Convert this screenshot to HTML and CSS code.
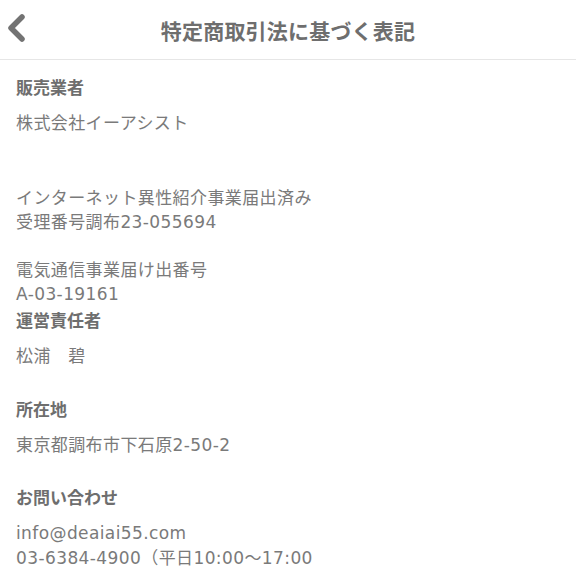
FILE: index.html
```html
<!DOCTYPE html>
<html lang="ja">
<head>
  <meta charset="UTF-8">
  <meta name="viewport" content="width=device-width, initial-scale=1">
  <title>特定商取引法に基づく表記</title>
  <link rel="stylesheet" href="styles.css">
</head>
<body>
  <div class="header">
    <a class="btn-back" href="#">
      <svg width="22" height="30" viewBox="0 0 22 30">
        <path d="M16 4 L5 15 L16 26" fill="none" stroke="#737373" stroke-width="5.5" stroke-linecap="round" stroke-linejoin="round"/>
      </svg>
    </a>
    <div class="title">特定商取引法に基づく表記</div>
  </div>

  <div class="container">
    <div class="section first">
      <div class="label">販売業者</div>
      <p class="value">株式会社イーアシスト</p>
      <p class="value license">インターネット異性紹介事業届出済み<br>受理番号調布23-055694</p>
      <p class="value telecom">電気通信事業届け出番号<br>A-03-19161</p>
    </div>
    <div class="section">
      <div class="label">運営責任者</div>
      <p class="value">松浦　碧</p>
    </div>
    <div class="section">
      <div class="label">所在地</div>
      <p class="value">東京都調布市下石原2-50-2</p>
    </div>
    <div class="section">
      <div class="label">お問い合わせ</div>
      <p class="value">info@deaiai55.com<br>03-6384-4900（平日10:00〜17:00</p>
    </div>
  </div>
</body>
</html>
```

FILE: styles.css
```css
/* Estilos básicos */
body {
  font-family: 'DejaVu Sans', 'Noto Sans CJK JP', sans-serif;
  margin: 0;
  padding: 0;
  background-color: #fff;
  color: #777;
}
.header {
  position: relative;
  height: 59px;
  border-bottom: 1px solid #e6e6e6;
  display: flex;
  justify-content: center;
  align-items: center;
}
.btn-back {
  position: absolute;
  left: 6px;
  top: 13px;
  display: block;
  line-height: 0;
}
.title {
  font-family: 'Noto Sans CJK JP', sans-serif;
  font-size: 21px;
  font-weight: bold;
  color: #6e6e6e;
  letter-spacing: 0.2px;
}
.container {
  padding: 14px 16px 0;
}
.section {
  margin-bottom: 27px;
}
.section.first {
  margin-bottom: 0;
}
.label {
  font-family: 'Noto Sans CJK JP', sans-serif;
  font-size: 17px;
  font-weight: bold;
  color: #6e6e6e;
  line-height: 25px;
  margin-bottom: 12px;
}
.value {
  margin: 0;
  font-size: 17px;
  line-height: 24.6px;
  letter-spacing: 0.4px;
  color: #7a7a7a;
}
.value.license {
  margin-top: 50px;
}
.value.telecom {
  margin-top: 23px;
}
```
